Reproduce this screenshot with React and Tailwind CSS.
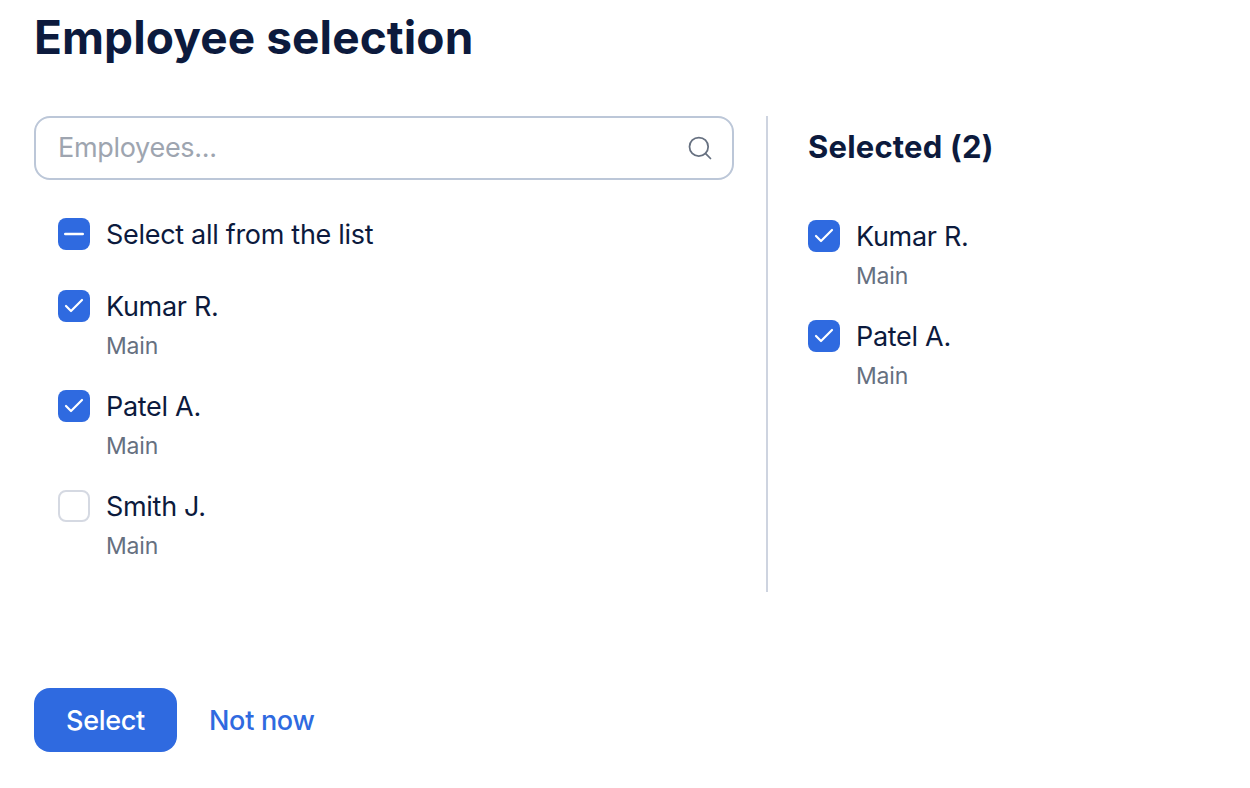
import { Check, Minus, Search } from 'lucide-react';

const employees = [
  { name: 'Kumar R.', team: 'Main', checked: true },
  { name: 'Patel A.', team: 'Main', checked: true },
  { name: 'Smith J.', team: 'Main', checked: false },
];

function Box({ state }) {
  if (state === 'none') {
    return <span className="block h-8 w-8 shrink-0 rounded-lg border-2 border-[#d5d9e2] bg-white" />;
  }
  return (
    <span className="flex h-8 w-8 shrink-0 items-center justify-center rounded-lg bg-[#2f6ae0] text-white">
      {state === 'some' ? (
        <Minus className="h-[30px] w-[30px]" strokeWidth={2} />
      ) : (
        <Check className="h-6 w-6" strokeWidth={2.2} />
      )}
    </span>
  );
}

function EmployeeRow({ name, team, checked }) {
  return (
    <div className="flex h-[68px] gap-4">
      <Box state={checked ? 'all' : 'none'} />
      <div className="pt-px">
        <div className="text-[27px] leading-8 tracking-[-0.3px] text-[#0c1a3d]">{name}</div>
        <div className="mt-[9px] text-[23px] leading-7 tracking-[-0.2px] text-[#667080]">{team}</div>
      </div>
    </div>
  );
}

export default function App() {
  const selected = employees.filter((e) => e.checked);

  return (
    <div className="h-[788px] overflow-hidden bg-white px-[34px] font-['Inter',sans-serif]">
      <h1 className="h-[116px] pt-2 text-[46px] leading-[58px] font-bold tracking-[0.1px] text-[#0c1a3d]">
        Employee selection
      </h1>

      <div className="flex h-[476px]">
        <div className="w-[700px] shrink-0">
          <div className="flex h-16 items-center justify-between rounded-2xl border-2 border-[#bcc7d8] pr-[18px] pl-[22px]">
            <span className="text-[27px] tracking-[-0.3px] text-[#9ea5b0]">Employees...</span>
            <Search className="h-7 w-7 text-[#667080]" strokeWidth={1.5} />
          </div>

          <div className="mt-[38px] pl-6">
            <div className="mb-10 flex h-8 items-center gap-4">
              <Box state="some" />
              <span className="pt-0.5 text-[27px] leading-8 tracking-[-0.3px] text-[#0c1a3d]">Select all from the list</span>
            </div>
            <div className="flex flex-col gap-8">
              {employees.map((e) => (
                <EmployeeRow key={e.name} {...e} />
              ))}
            </div>
          </div>
        </div>

        <div className="ml-8 w-[2px] bg-[#ced4e0]" />

        <div className="pl-10">
          <h2 className="flex h-[62px] items-center text-[31px] font-bold tracking-[0.2px] text-[#0c1a3d]">
            Selected ({selected.length})
          </h2>
          <div className="mt-[42px] flex flex-col gap-8">
            {selected.map((e) => (
              <EmployeeRow key={e.name} {...e} />
            ))}
          </div>
        </div>
      </div>

      <div className="mt-24 flex items-center gap-8">
        <button className="h-16 w-[143px] rounded-2xl bg-[#2f6ae0] pt-0.5 text-[27px] font-medium tracking-[-0.3px] text-white">
          Select
        </button>
        <button className="pt-0.5 text-[27px] font-medium tracking-[-0.3px] text-[#2f6ae0]">Not now</button>
      </div>
    </div>
  );
}
